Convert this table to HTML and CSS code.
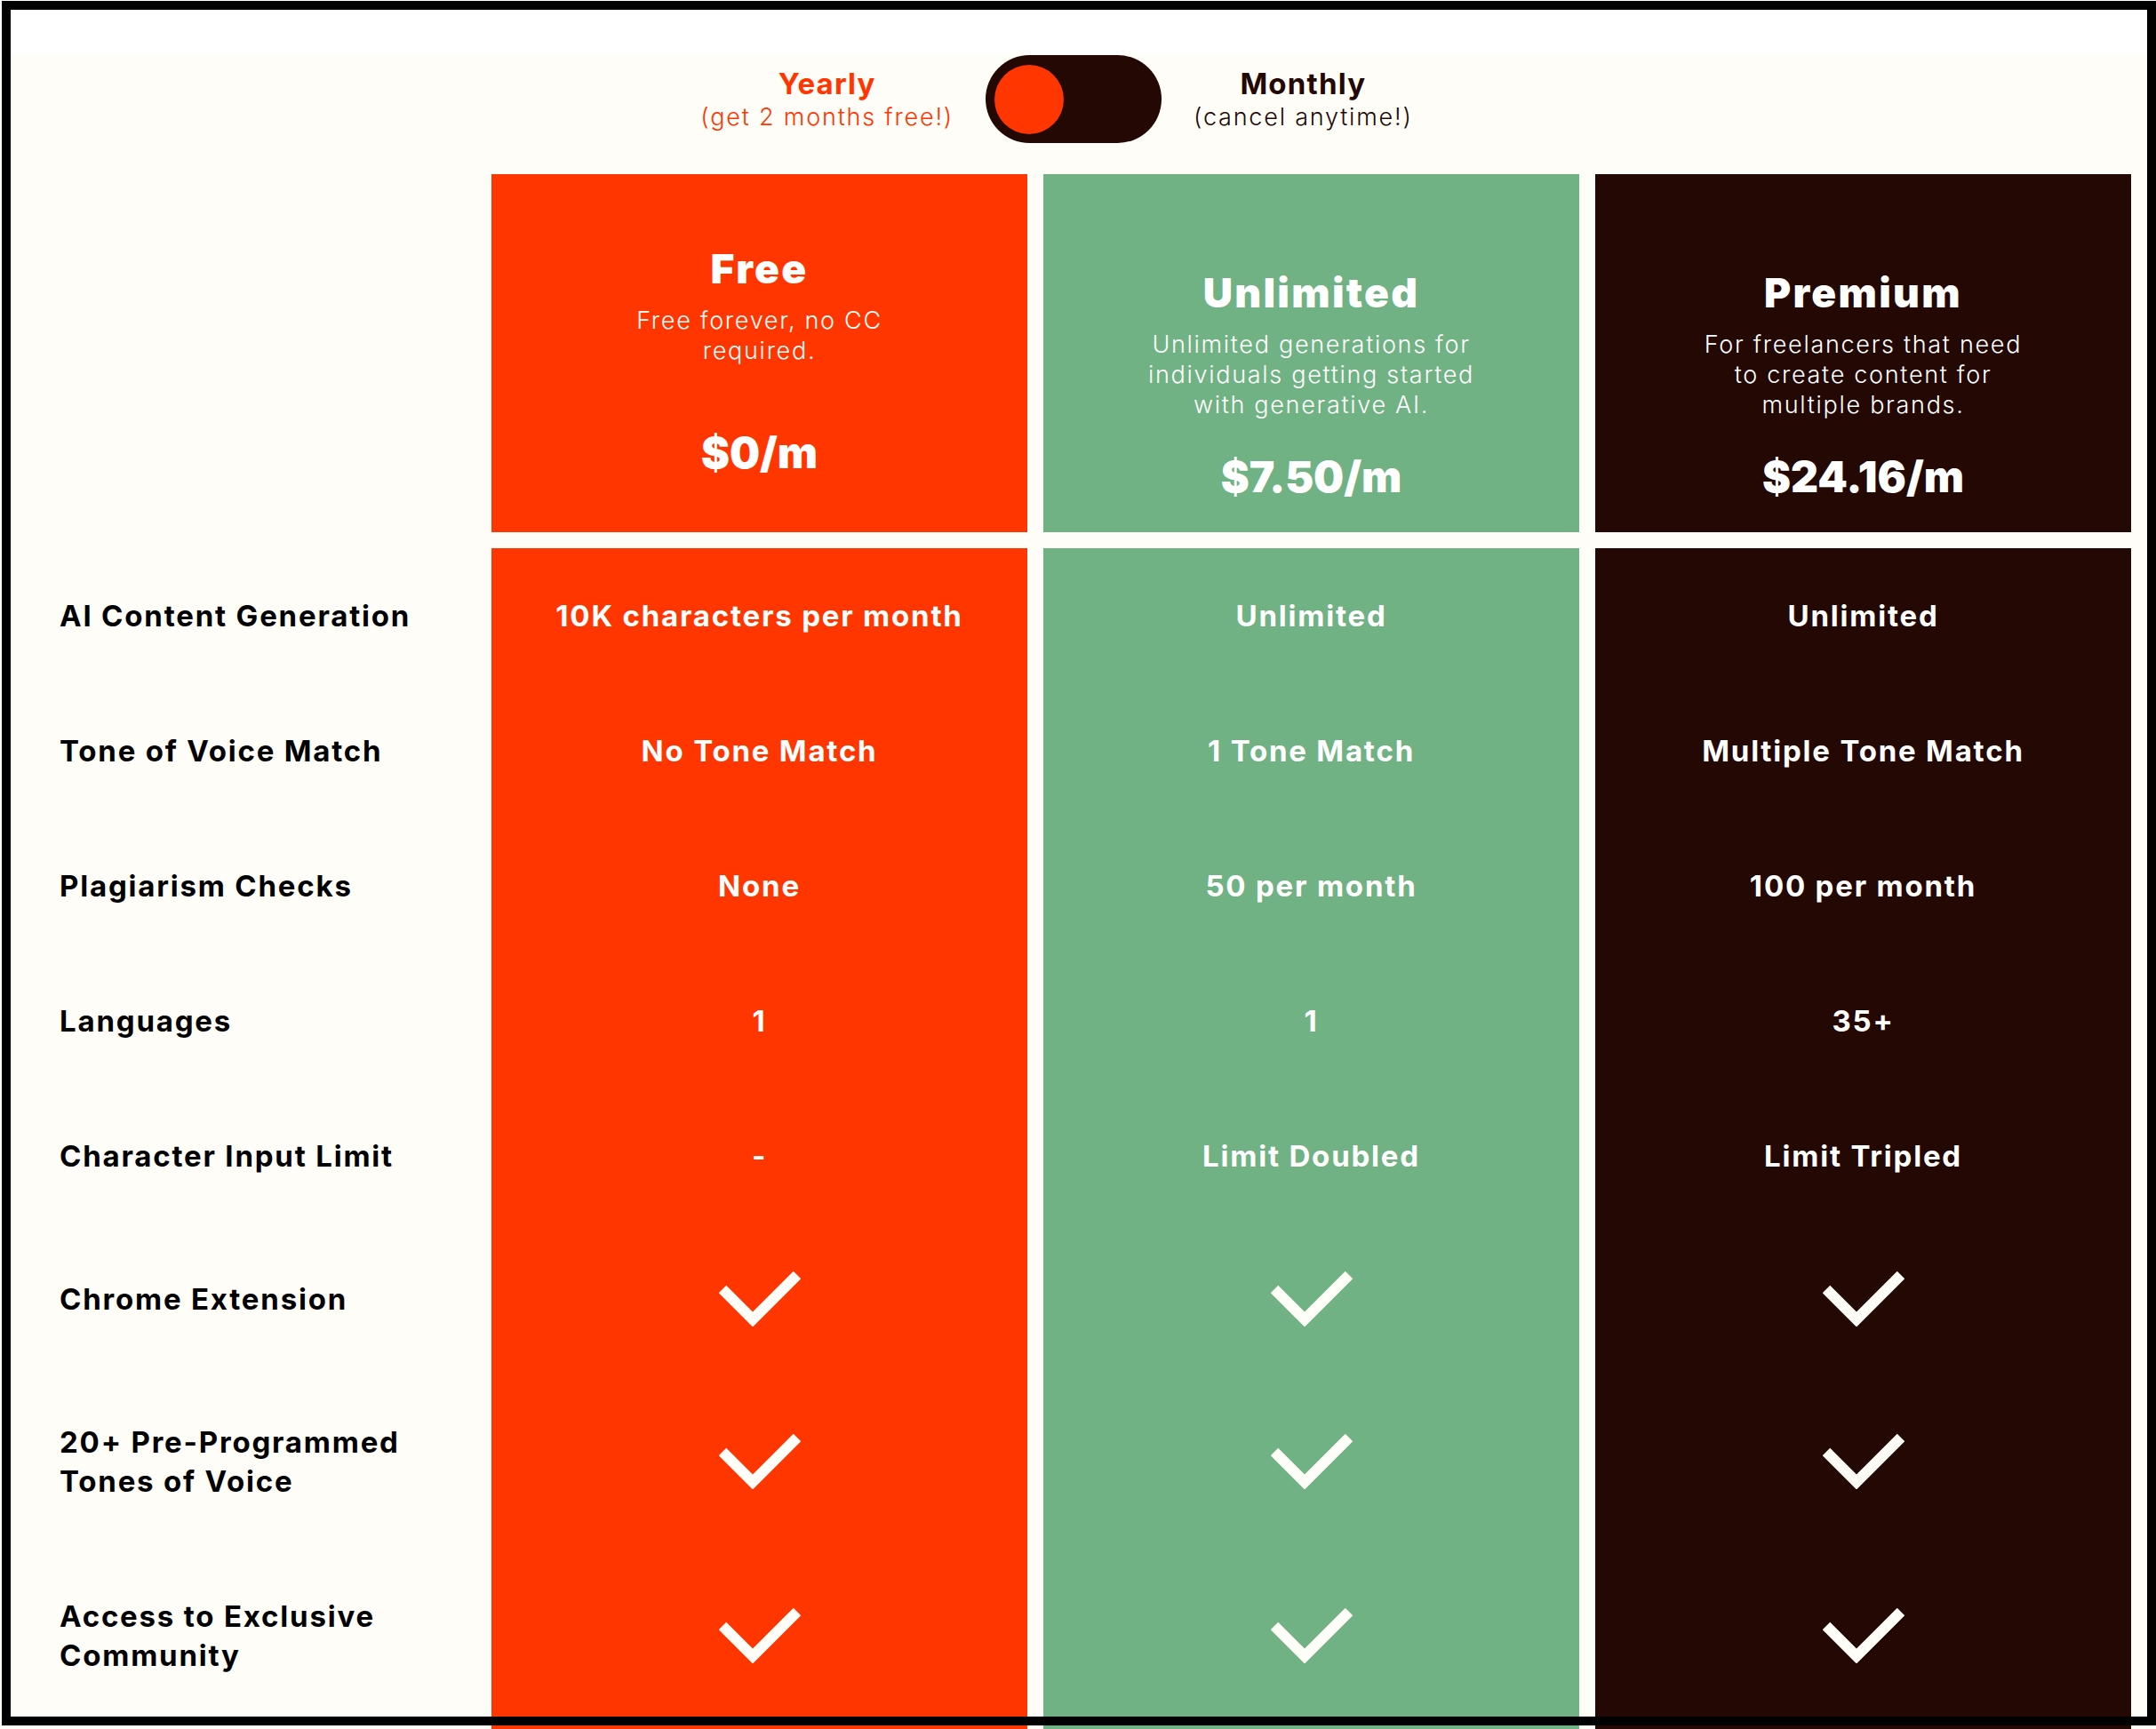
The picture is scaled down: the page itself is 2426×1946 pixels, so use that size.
FILE: index.html
```html
<!DOCTYPE html>
<html lang="en">
<head>
<meta charset="utf-8">
<title>Pricing</title>
<link rel="stylesheet" href="styles.css">
</head>
<body>
<div class="page">
  <section class="pricing">
    <div class="billing">
      <div class="billing-opt billing-opt--active">
        <div class="billing-title">Yearly</div>
        <div class="billing-sub">(get 2 months free!)</div>
      </div>
      <div class="switch" role="switch" aria-checked="false"><span class="switch-knob"></span></div>
      <div class="billing-opt billing-opt--right">
        <div class="billing-title">Monthly</div>
        <div class="billing-sub">(cancel anytime!)</div>
      </div>
    </div>

    <div class="table">
      <div class="cell head-spacer"></div>
      <div class="plan-head plan-head--free c-free">
        <div class="plan-name">Free</div>
        <div class="plan-desc">Free forever, no CC required.</div>
        <div class="plan-price">$0/m</div>
      </div>
      <div class="plan-head c-unl">
        <div class="plan-name">Unlimited</div>
        <div class="plan-desc">Unlimited generations for individuals getting started with generative AI.</div>
        <div class="plan-price">$7.50/m</div>
      </div>
      <div class="plan-head c-pre">
        <div class="plan-name">Premium</div>
        <div class="plan-desc">For freelancers that need to create content for multiple brands.</div>
        <div class="plan-price">$24.16/m</div>
      </div>

      <div class="cell label">AI Content Generation</div>
      <div class="cell value c-free">10K characters per month</div>
      <div class="cell value c-unl">Unlimited</div>
      <div class="cell value c-pre">Unlimited</div>

      <div class="cell label">Tone of Voice Match</div>
      <div class="cell value c-free">No Tone Match</div>
      <div class="cell value c-unl">1 Tone Match</div>
      <div class="cell value c-pre">Multiple Tone Match</div>

      <div class="cell label">Plagiarism Checks</div>
      <div class="cell value c-free">None</div>
      <div class="cell value c-unl">50 per month</div>
      <div class="cell value c-pre">100 per month</div>

      <div class="cell label">Languages</div>
      <div class="cell value c-free">1</div>
      <div class="cell value c-unl">1</div>
      <div class="cell value c-pre">35+</div>

      <div class="cell label">Character Input Limit</div>
      <div class="cell value c-free">-</div>
      <div class="cell value c-unl">Limit Doubled</div>
      <div class="cell value c-pre">Limit Tripled</div>

      <div class="cell label">Chrome Extension</div>
      <div class="cell value c-free"><svg class="check" viewBox="0 0 92 62"><polyline points="4,20 38,54 88,4"/></svg></div>
      <div class="cell value c-unl"><svg class="check" viewBox="0 0 92 62"><polyline points="4,20 38,54 88,4"/></svg></div>
      <div class="cell value c-pre"><svg class="check" viewBox="0 0 92 62"><polyline points="4,20 38,54 88,4"/></svg></div>

      <div class="cell label">20+ Pre-Programmed Tones of Voice</div>
      <div class="cell value c-free"><svg class="check" viewBox="0 0 92 62"><polyline points="4,20 38,54 88,4"/></svg></div>
      <div class="cell value c-unl"><svg class="check" viewBox="0 0 92 62"><polyline points="4,20 38,54 88,4"/></svg></div>
      <div class="cell value c-pre"><svg class="check" viewBox="0 0 92 62"><polyline points="4,20 38,54 88,4"/></svg></div>

      <div class="cell label">Access to Exclusive Community</div>
      <div class="cell value c-free"><svg class="check" viewBox="0 0 92 62"><polyline points="4,20 38,54 88,4"/></svg></div>
      <div class="cell value c-unl"><svg class="check" viewBox="0 0 92 62"><polyline points="4,20 38,54 88,4"/></svg></div>
      <div class="cell value c-pre"><svg class="check" viewBox="0 0 92 62"><polyline points="4,20 38,54 88,4"/></svg></div>

      <div class="cell tail"></div>
      <div class="cell tail c-free"></div>
      <div class="cell tail c-unl"></div>
      <div class="cell tail c-pre"></div>
    </div>
  </section>
</div>
<div class="frame"></div>
</body>
</html>
```

FILE: styles.css
```css
html, body {
  margin: 0;
  padding: 0;
  overflow: hidden;
  background: #ffffff;
}

body {
  font-family: "Inter", "Liberation Sans", sans-serif;
  color: #000;
}

.page {
  padding-top: 60px;
}

.pricing {
  background: #fffdf8;
  padding-left: 12px;
  padding-right: 10px;
}

/* billing toggle */
.billing {
  display: grid;
  grid-template-columns: 1fr auto 1fr;
  align-items: center;
  column-gap: 36px;
  padding-top: 1px;
  padding-right: 12px;
  height: 100px;
  margin-bottom: 35px;
}

.billing-opt {
  justify-self: end;
  text-align: center;
  color: #230803;
}

.billing-opt--active {
  color: #ff3600;
}

.billing-opt--right {
  justify-self: start;
}

.billing-title {
  font-size: 33px;
  line-height: 41px;
  font-weight: 700;
  letter-spacing: 1.2px;
}

.billing-sub {
  font-size: 27px;
  line-height: 34px;
  font-weight: 300;
  letter-spacing: 1.8px;
}

.switch {
  width: 198px;
  height: 99px;
  box-sizing: border-box;
  border-radius: 50px;
  background: #230803;
  padding: 11px 10px;
  display: flex;
}

.switch-knob {
  width: 78px;
  height: 78px;
  border-radius: 50%;
  background: #ff3600;
}

/* table */
.table {
  display: grid;
  grid-template-columns: 523px repeat(3, 603px);
  column-gap: 18px;
}

.c-free { background: #ff3600; color: #fff; }
.c-unl { background: #70b283; color: #fff; }
.c-pre { background: #230803; color: #fff; }

.head-spacer {
  margin-bottom: 18px;
}

.plan-head {
  height: 403px;
  margin-bottom: 18px;
  box-sizing: border-box;
  padding-top: 106px;
  display: flex;
  flex-direction: column;
  align-items: center;
  text-align: center;
}

.plan-head--free {
  padding-top: 79px;
}

.plan-name {
  font-size: 46px;
  line-height: 54px;
  font-weight: 900;
  letter-spacing: 2.3px;
}

.plan-desc {
  margin-top: 15px;
  max-width: 380px;
  min-height: 102px;
  font-size: 27px;
  line-height: 34px;
  font-weight: 300;
  letter-spacing: 1.7px;
}

.plan-price {
  margin-top: 35px;
  font-size: 48px;
  line-height: 58px;
  font-weight: 900;
}

.cell {
  display: flex;
  align-items: center;
  padding: 54px 0;
  font-size: 33px;
  line-height: 44px;
  font-weight: 700;
  letter-spacing: 1.8px;
}

.label {
  padding-left: 55px;
  padding-right: 50px;
  color: #000;
}

.value {
  justify-content: center;
  text-align: center;
}

.tail {
  padding: 0;
  height: 40px;
}

.check {
  display: block;
  width: 92px;
  height: 62px;
  fill: none;
  stroke: #fffdf8;
  stroke-width: 12;
  stroke-linecap: butt;
  stroke-linejoin: miter;
}

/* outer frame drawn over the page */
.frame {
  position: absolute;
  left: 2px;
  top: 1px;
  width: 2424px;
  height: 1941px;
  box-sizing: border-box;
  border: 10px solid #000;
  pointer-events: none;
}
```
